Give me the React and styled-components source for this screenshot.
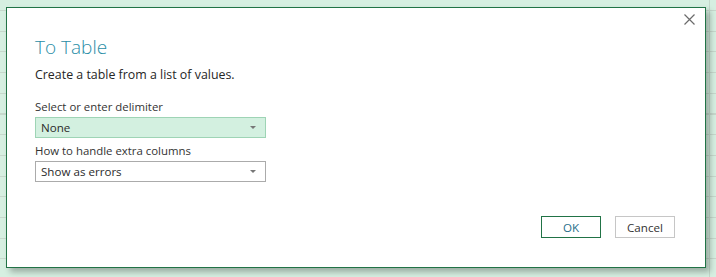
import React from "react"
import styled, { createGlobalStyle } from "styled-components"

const Global = createGlobalStyle`
  html, body { margin: 0; padding: 0; }
  body {
    font-family: "Open Sans", "Noto Sans", sans-serif;
    background: #d6efe1;
  }
`

const Sheet = styled.div`
  width: 716px;
  height: 277px;
  box-sizing: border-box;
  padding: 7px 10px 9px 6px;
  background-color: #d6efe1;
  background-image:
    linear-gradient(to right, transparent 709px, #c3d9cb 709px, #c3d9cb 710px, transparent 710px),
    repeating-linear-gradient(to bottom, transparent 0, transparent 10px, #c6d8cc 10px, #c6d8cc 11px, transparent 11px, transparent 20.7px);
  display: flex;
`

const Dialog = styled.div`
  flex: 1;
  position: relative;
  background: #fff;
  border: 1px solid #217346;
  box-shadow: 4px 4px 6px rgba(0, 0, 0, 0.28);
  display: flex;
  flex-direction: column;
  padding: 26px 28px 0 28px;
`

const Close = styled.button`
  position: absolute;
  top: 1px;
  right: 6px;
  width: 20px;
  height: 20px;
  padding: 0;
  border: none;
  background: none;
  display: flex;
  align-items: center;
  justify-content: center;
`

const Title = styled.h1`
  margin: 0;
  font-weight: 300;
  font-size: 19px;
  line-height: 26px;
  color: #2a8da6;
`

const Lead = styled.p`
  margin: 6px 0 15px;
  font-size: 12.4px;
  line-height: 18px;
  color: #262626;
`

const Label = styled.label`
  font-size: 11.4px;
  line-height: 16px;
  color: #333;
  margin-bottom: 2px;
`

const Select = styled.div`
  width: 231px;
  height: 21px;
  box-sizing: border-box;
  border: 1px solid ${p => (p.$active ? "#9ed4b5" : "#ababab")};
  background: ${p => (p.$active ? "#d3f0e0" : "#fff")};
  display: flex;
  align-items: center;
  justify-content: space-between;
  padding: 0 9px 0 5px;
  font-size: 11.6px;
  color: #2b2b2b;
  margin-bottom: ${p => p.$gap || 0}px;
`

const Arrow = styled.span`
  width: 0;
  height: 0;
  border-left: 3px solid transparent;
  border-right: 3px solid transparent;
  border-top: 3px solid #777;
`

const Footer = styled.div`
  margin-top: auto;
  margin-bottom: 29px;
  display: flex;
  justify-content: flex-end;
  gap: 14px;
  padding-right: 2px;
`

const Button = styled.button`
  width: 60px;
  height: 22px;
  box-sizing: border-box;
  background: #fff;
  border: 1px solid ${p => (p.$primary ? "#217346" : "#c6c6c6")};
  font-family: inherit;
  font-size: 11.6px;
  color: ${p => (p.$primary ? "#1f6f8a" : "#333")};
  padding: 0;
`

export default function App() {
  return (
    <>
      <Global />
      <Sheet>
        <Dialog>
          <Close aria-label="Close">
            <svg width="11" height="11" viewBox="0 0 11 11">
              <path d="M0.5 0.5 L10.5 10.5 M10.5 0.5 L0.5 10.5" stroke="#6b6b6b" strokeWidth="1.2" />
            </svg>
          </Close>
          <Title>To Table</Title>
          <Lead>Create a table from a list of values.</Lead>
          <Label>Select or enter delimiter</Label>
          <Select $active $gap={5}>
            None
            <Arrow />
          </Select>
          <Label>How to handle extra columns</Label>
          <Select>
            Show as errors
            <Arrow />
          </Select>
          <Footer>
            <Button $primary>OK</Button>
            <Button>Cancel</Button>
          </Footer>
        </Dialog>
      </Sheet>
    </>
  )
}
